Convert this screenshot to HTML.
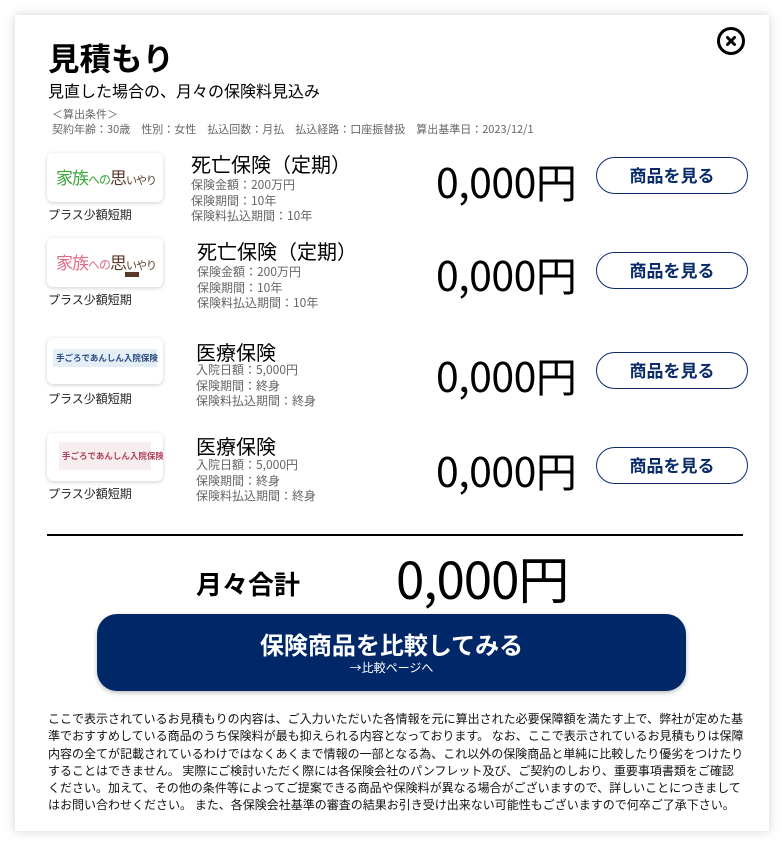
<!DOCTYPE html>
<html><head><meta charset="utf-8"><style>
*{margin:0;padding:0;box-sizing:border-box}
body{width:784px;height:846px;background:#fff;font-family:"Noto Sans CJK JP",sans-serif;position:relative;overflow:hidden;color:#000}
.modal{position:absolute;left:15px;top:15px;width:754px;height:816px;background:#fff;box-shadow:0 0 10px rgba(0,0,0,.18)}
.a{position:absolute;white-space:nowrap}
.logo{position:absolute;left:47px;width:116px;background:#fff;border-radius:6px;box-shadow:0 1px 4px rgba(0,0,0,.2);overflow:hidden}
.co{font-size:12px;color:#222;left:48px}
.pt{font-size:20px;line-height:24px}
.d{font-size:12px;color:#666;line-height:15.5px}
.pr{font-size:41px;line-height:46px;letter-spacing:-0.5px}
.btn{position:absolute;left:596px;width:152px;height:37px;border:1.5px solid #0a2b6b;border-radius:19px;color:#0a2b6b;font-weight:bold;font-size:17px;text-align:center;line-height:34px}
.close{position:absolute;left:717px;top:27px;width:28px;height:28px;border:3px solid #000;border-radius:50%}
</style></head><body>
<div class="modal"></div>
<div class="close"><svg width="22" height="22" viewBox="0 0 22 22" style="position:absolute;left:0;top:0"><path d="M7.5 7.5L14.5 14.5M14.5 7.5L7.5 14.5" stroke="#000" stroke-width="3" stroke-linecap="round"/></svg></div>
<div class="a" style="left:48px;top:35px;font-size:31.5px;font-weight:bold;line-height:44px">見積もり</div>
<div class="a" style="left:48px;top:79px;font-size:16px;line-height:23px">見直した場合の、月々の保険料見込み</div>
<div class="a" style="left:52px;top:107px;font-size:11px;color:#666;line-height:15px">＜算出条件＞<br>契約年齢：30歳　性別：女性　払込回数：月払　払込経路：口座振替扱　算出基準日：2023/12/1</div>

<!-- row1 -->
<div class="logo" style="top:153px;height:49px"><div class="a" style="left:9px;top:11px;font-size:17px;color:#3aa53a;letter-spacing:-1px">家族<span style="font-size:12px">への</span><span style="color:#5a3a2a">思</span><span style="font-size:11px;color:#5a3a2a">いやり</span></div></div>
<div class="a co" style="top:206px">プラス少額短期</div>
<div class="a pt" style="left:191px;top:152px">死亡保険（定期）</div>
<div class="a d" style="left:191px;top:177px">保険金額：200万円<br>保険期間：10年<br>保険料払込期間：10年</div>
<div class="a pr" style="left:436px;top:157px">0,000円</div>
<div class="btn" style="top:157px">商品を見る</div>

<!-- row2 -->
<div class="logo" style="top:238px;height:49px"><div class="a" style="left:9px;top:11px;font-size:17px;color:#e06a86;letter-spacing:-1px">家族<span style="font-size:12px">への</span><span style="color:#5a3a2a">思</span><span style="font-size:11px;color:#5a3a2a">いやり</span></div><div class="a" style="left:78px;top:34px;width:14px;height:5px;background:#5a3a2a"></div></div>
<div class="a co" style="top:291px">プラス少額短期</div>
<div class="a pt" style="left:197px;top:239px">死亡保険（定期）</div>
<div class="a d" style="left:197px;top:264px">保険金額：200万円<br>保険期間：10年<br>保険料払込期間：10年</div>
<div class="a pr" style="left:436px;top:250px">0,000円</div>
<div class="btn" style="top:252px">商品を見る</div>

<!-- row3 -->
<div class="logo" style="top:338px;height:46px"><div class="a" style="left:6px;top:11px;width:104px;height:18px;background:#e4eef7"></div><div class="a" style="left:9px;top:13px;font-size:8.5px;font-weight:bold;color:#2a4a80;line-height:14px">手ごろであんしん入院保険</div></div>
<div class="a co" style="top:390px">プラス少額短期</div>
<div class="a pt" style="left:196px;top:340px">医療保険</div>
<div class="a d" style="left:196px;top:362px">入院日額：5,000円<br>保険期間：終身<br>保険料払込期間：終身</div>
<div class="a pr" style="left:436px;top:351px">0,000円</div>
<div class="btn" style="top:352px">商品を見る</div>

<!-- row4 -->
<div class="logo" style="top:433px;height:48px"><div class="a" style="left:12px;top:9px;width:92px;height:28px;background:#f6eeee"></div><div class="a" style="left:15px;top:16px;font-size:8.5px;font-weight:bold;color:#b0405a;line-height:14px">手ごろであんしん入院保険</div></div>
<div class="a co" style="top:485px">プラス少額短期</div>
<div class="a pt" style="left:196px;top:434px">医療保険</div>
<div class="a d" style="left:196px;top:457px">入院日額：5,000円<br>保険期間：終身<br>保険料払込期間：終身</div>
<div class="a pr" style="left:436px;top:446px">0,000円</div>
<div class="btn" style="top:447px">商品を見る</div>

<div class="a" style="left:47px;top:534px;width:696px;height:2px;background:#000"></div>
<div class="a" style="left:196px;top:566px;font-size:26px;font-weight:bold;line-height:36px">月々合計</div>
<div class="a" style="left:396px;top:547px;font-size:51px;line-height:60px;letter-spacing:-1px">0,000円</div>

<div class="a" style="left:97px;top:614px;width:589px;height:77px;background:#002868;border-radius:20px;box-shadow:0 2px 5px rgba(0,0,0,.25);color:#fff;text-align:center">
<div style="font-size:24px;font-weight:bold;line-height:32px;margin-top:14px">保険商品を比較してみる</div>
<div style="font-size:12px;line-height:16px;margin-top:0px">→比較ページへ</div></div>

<div class="a" style="left:48px;top:710px;font-size:12px;line-height:17.3px;color:#111;letter-spacing:0px">ここで表示されているお見積もりの内容は、ご入力いただいた各情報を元に算出された必要保障額を満たす上で、弊社が定めた基<br>準でおすすめしている商品のうち保険料が最も抑えられる内容となっております。 なお、ここで表示されているお見積もりは保障<br>内容の全てが記載されているわけではなくあくまで情報の一部となる為、これ以外の保険商品と単純に比較したり優劣をつけたり<br>することはできません。 実際にご検討いただく際には各保険会社のパンフレット及び、ご契約のしおり、重要事項書類をご確認<br>ください。加えて、その他の条件等によってご提案できる商品や保険料が異なる場合がございますので、詳しいことにつきまして<br>はお問い合わせください。 また、各保険会社基準の審査の結果お引き受け出来ない可能性もございますので何卒ご了承下さい。</div>
</body></html>
